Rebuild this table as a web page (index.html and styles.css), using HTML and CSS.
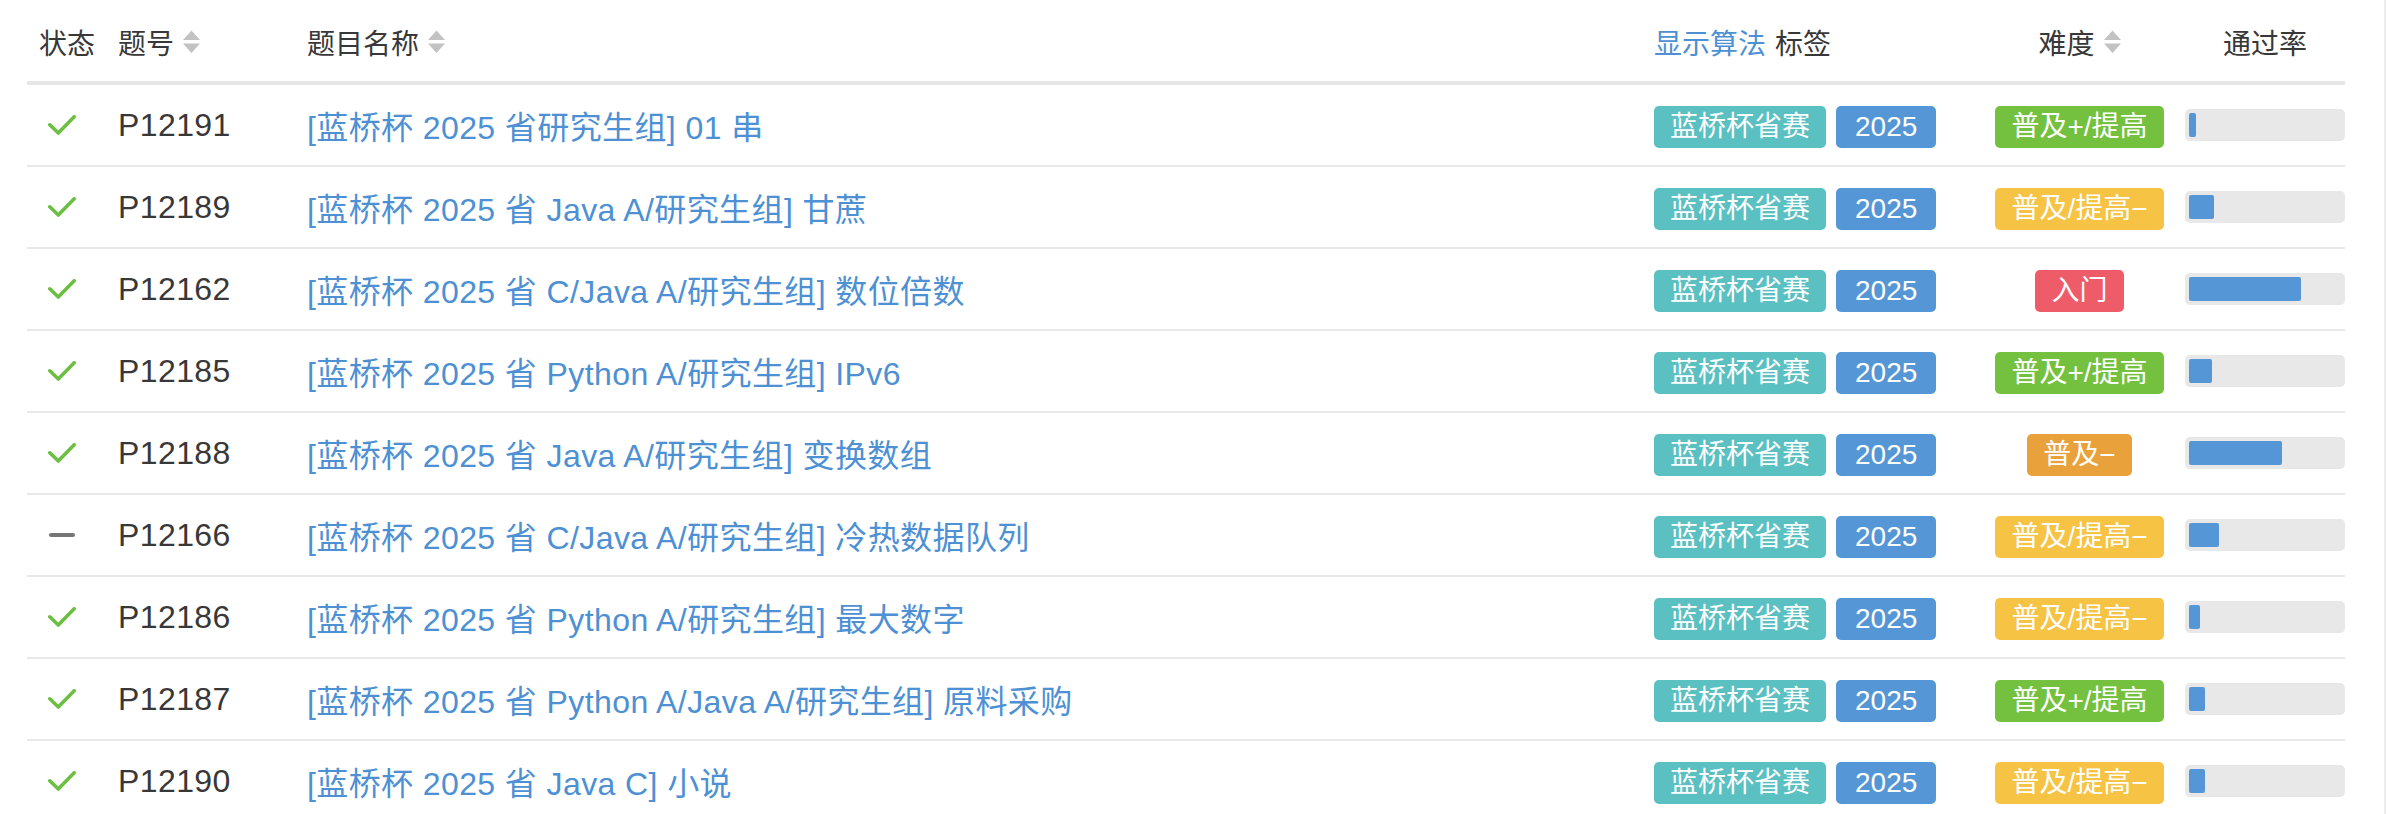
FILE: index.html
```html
<!DOCTYPE html>
<html lang="zh-CN">
<head>
<meta charset="utf-8">
<title>题目列表</title>
<link rel="stylesheet" href="styles.css">
</head>
<body>
<div class="page">
  <div class="list">
    <div class="row head">
      <div class="c c-status">状态</div>
      <div class="c c-pid">题号<svg class="sort" viewBox="0 0 17 24" width="17" height="24"><polygon points="0,10 8.5,0.5 17,10"/><polygon points="0,13.5 17,13.5 8.5,23"/></svg></div>
      <div class="c c-title">题目名称<svg class="sort" viewBox="0 0 17 24" width="17" height="24"><polygon points="0,10 8.5,0.5 17,10"/><polygon points="0,13.5 17,13.5 8.5,23"/></svg></div>
      <div class="c c-tags"><a class="toggle">显示算法</a> 标签</div>
      <div class="c c-diff">难度<svg class="sort" viewBox="0 0 17 24" width="17" height="24"><polygon points="0,10 8.5,0.5 17,10"/><polygon points="0,13.5 17,13.5 8.5,23"/></svg></div>
      <div class="c c-rate">通过率</div>
    </div>

    <div class="row">
      <div class="c c-status"><svg class="ac" viewBox="0 0 28 20" width="28" height="20"><polyline points="1.8,9.8 10.3,18 26.2,1.8"/></svg></div>
      <div class="c c-pid">P12191</div>
      <div class="c c-title"><a>[蓝桥杯 2025 省研究生组] 01 串</a></div>
      <div class="c c-tags"><span class="tag tag-comp">蓝桥杯省赛</span><span class="tag tag-year">2025</span></div>
      <div class="c c-diff"><span class="diff d-green">普及+/提高</span></div>
      <div class="c c-rate"><div class="bar"><div class="fill" style="width:4.8%"></div></div></div>
    </div>

    <div class="row">
      <div class="c c-status"><svg class="ac" viewBox="0 0 28 20" width="28" height="20"><polyline points="1.8,9.8 10.3,18 26.2,1.8"/></svg></div>
      <div class="c c-pid">P12189</div>
      <div class="c c-title"><a>[蓝桥杯 2025 省 Java A/研究生组] 甘蔗</a></div>
      <div class="c c-tags"><span class="tag tag-comp">蓝桥杯省赛</span><span class="tag tag-year">2025</span></div>
      <div class="c c-diff"><span class="diff d-yellow">普及/提高−</span></div>
      <div class="c c-rate"><div class="bar"><div class="fill" style="width:16.4%"></div></div></div>
    </div>

    <div class="row">
      <div class="c c-status"><svg class="ac" viewBox="0 0 28 20" width="28" height="20"><polyline points="1.8,9.8 10.3,18 26.2,1.8"/></svg></div>
      <div class="c c-pid">P12162</div>
      <div class="c c-title"><a>[蓝桥杯 2025 省 C/Java A/研究生组] 数位倍数</a></div>
      <div class="c c-tags"><span class="tag tag-comp">蓝桥杯省赛</span><span class="tag tag-year">2025</span></div>
      <div class="c c-diff"><span class="diff d-red">入门</span></div>
      <div class="c c-rate"><div class="bar"><div class="fill" style="width:73.7%"></div></div></div>
    </div>

    <div class="row">
      <div class="c c-status"><svg class="ac" viewBox="0 0 28 20" width="28" height="20"><polyline points="1.8,9.8 10.3,18 26.2,1.8"/></svg></div>
      <div class="c c-pid">P12185</div>
      <div class="c c-title"><a>[蓝桥杯 2025 省 Python A/研究生组] IPv6</a></div>
      <div class="c c-tags"><span class="tag tag-comp">蓝桥杯省赛</span><span class="tag tag-year">2025</span></div>
      <div class="c c-diff"><span class="diff d-green">普及+/提高</span></div>
      <div class="c c-rate"><div class="bar"><div class="fill" style="width:15.1%"></div></div></div>
    </div>

    <div class="row">
      <div class="c c-status"><svg class="ac" viewBox="0 0 28 20" width="28" height="20"><polyline points="1.8,9.8 10.3,18 26.2,1.8"/></svg></div>
      <div class="c c-pid">P12188</div>
      <div class="c c-title"><a>[蓝桥杯 2025 省 Java A/研究生组] 变换数组</a></div>
      <div class="c c-tags"><span class="tag tag-comp">蓝桥杯省赛</span><span class="tag tag-year">2025</span></div>
      <div class="c c-diff"><span class="diff d-orange">普及−</span></div>
      <div class="c c-rate"><div class="bar"><div class="fill" style="width:61.2%"></div></div></div>
    </div>

    <div class="row">
      <div class="c c-status"><svg class="tried" viewBox="0 0 28 6" width="28" height="6"><line x1="3" y1="3" x2="25" y2="3"/></svg></div>
      <div class="c c-pid">P12166</div>
      <div class="c c-title"><a>[蓝桥杯 2025 省 C/Java A/研究生组] 冷热数据队列</a></div>
      <div class="c c-tags"><span class="tag tag-comp">蓝桥杯省赛</span><span class="tag tag-year">2025</span></div>
      <div class="c c-diff"><span class="diff d-yellow">普及/提高−</span></div>
      <div class="c c-rate"><div class="bar"><div class="fill" style="width:19.7%"></div></div></div>
    </div>

    <div class="row">
      <div class="c c-status"><svg class="ac" viewBox="0 0 28 20" width="28" height="20"><polyline points="1.8,9.8 10.3,18 26.2,1.8"/></svg></div>
      <div class="c c-pid">P12186</div>
      <div class="c c-title"><a>[蓝桥杯 2025 省 Python A/研究生组] 最大数字</a></div>
      <div class="c c-tags"><span class="tag tag-comp">蓝桥杯省赛</span><span class="tag tag-year">2025</span></div>
      <div class="c c-diff"><span class="diff d-yellow">普及/提高−</span></div>
      <div class="c c-rate"><div class="bar"><div class="fill" style="width:7.2%"></div></div></div>
    </div>

    <div class="row">
      <div class="c c-status"><svg class="ac" viewBox="0 0 28 20" width="28" height="20"><polyline points="1.8,9.8 10.3,18 26.2,1.8"/></svg></div>
      <div class="c c-pid">P12187</div>
      <div class="c c-title"><a>[蓝桥杯 2025 省 Python A/Java A/研究生组] 原料采购</a></div>
      <div class="c c-tags"><span class="tag tag-comp">蓝桥杯省赛</span><span class="tag tag-year">2025</span></div>
      <div class="c c-diff"><span class="diff d-green">普及+/提高</span></div>
      <div class="c c-rate"><div class="bar"><div class="fill" style="width:10.5%"></div></div></div>
    </div>

    <div class="row">
      <div class="c c-status"><svg class="ac" viewBox="0 0 28 20" width="28" height="20"><polyline points="1.8,9.8 10.3,18 26.2,1.8"/></svg></div>
      <div class="c c-pid">P12190</div>
      <div class="c c-title"><a>[蓝桥杯 2025 省 Java C] 小说</a></div>
      <div class="c c-tags"><span class="tag tag-comp">蓝桥杯省赛</span><span class="tag tag-year">2025</span></div>
      <div class="c c-diff"><span class="diff d-yellow">普及/提高−</span></div>
      <div class="c c-rate"><div class="bar"><div class="fill" style="width:10.5%"></div></div></div>
    </div>
  </div>
</div>
</body>
</html>
```

FILE: styles.css
```css
html, body {
  margin: 0;
  padding: 0;
  background: #fff;
}

body {
  font-family: "Liberation Sans", "Noto Sans CJK SC", sans-serif;
  color: #383838;
  overflow: hidden;
}

.page {
  width: 2386px;
  height: 814px;
  border-right: 2px solid #ececec;
  padding-left: 27px;
  box-sizing: border-box;
}

.list {
  width: 2318px;
}

.row {
  display: grid;
  grid-template-columns: 91px 189px 1347px 320px 211px 160px;
  align-items: center;
  height: 80px;
  border-bottom: 2px solid #e8e8e8;
  font-size: 32px;
}

.row.head {
  height: 79px;
  padding-top: 2px;
  border-bottom: 4px solid #e6e6e6;
  font-size: 28px;
  color: #383838;
}

.c {
  display: flex;
  align-items: center;
  white-space: nowrap;
}

.c-pid,
.c-title a {
  letter-spacing: 0.4px;
}

.head .c-pid,
.head .c-title {
  letter-spacing: 0;
}

.head .c-status {
  padding-left: 12px;
}

.c-status {
  padding-left: 21px;
}

.c-title a {
  color: #4d90d4;
  text-decoration: none;
}

.toggle {
  color: #4d90d4;
  margin-right: 9px;
}

.sort {
  margin-left: 9px;
  fill: #c2c2c2;
}

.c-diff {
  justify-content: center;
}

.c-rate {
  justify-content: center;
}

.ac {
  fill: none;
  stroke: #6cbf42;
  stroke-width: 3.6;
  stroke-linecap: round;
  stroke-linejoin: round;
}

.tried {
  stroke: #767676;
  stroke-width: 4;
  stroke-linecap: round;
}

.row:not(.head) .c-tags,
.row:not(.head) .c-diff {
  padding-top: 4px;
}

.tag,
.diff {
  display: inline-block;
  height: 42px;
  line-height: 42px;
  padding: 0 16px;
  border-radius: 5px;
  font-size: 28px;
  color: #fff;
}

.tag + .tag {
  margin-left: 10px;
}

.tag-comp { background: #5bc0c1; }
.tag-year {
  background: #5597d6;
  padding: 0 19px;
}

.d-green { background: #73c13e; }
.d-yellow { background: #f6c344; }
.d-red { background: #ee5c69; }
.d-orange { background: #e9a23b; }

.bar {
  width: 160px;
  height: 32px;
  padding: 4px;
  box-sizing: border-box;
  background: #e8e8e8;
  border-radius: 5px;
}

.fill {
  height: 24px;
  background: #5597d6;
  border-radius: 2px;
}
```
